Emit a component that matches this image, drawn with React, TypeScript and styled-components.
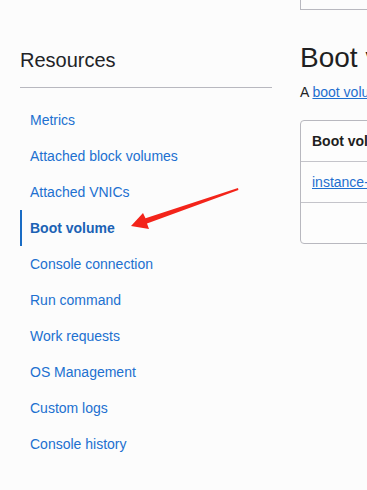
import React from 'react';
import styled, { createGlobalStyle } from 'styled-components';

const GlobalStyle = createGlobalStyle`
  html, body {
    margin: 0;
    padding: 0;
    background: #fcfcfc;
    font-family: "Liberation Sans", Arial, sans-serif;
    overflow: hidden;
  }
`;

const Shell = styled.div`
  position: relative;
  width: 367px;
  height: 490px;
  overflow: hidden;
`;

const Page = styled.div`
  display: flex;
  align-items: flex-start;
  gap: 28px;
  padding-left: 20px;
`;

const Sidebar = styled.aside`
  width: 252px;
  flex-shrink: 0;
  padding-top: 48px;
`;

const SideTitle = styled.h2`
  margin: 0;
  font-size: 20px;
  line-height: 24px;
  font-weight: 400;
  color: #222326;
  padding-bottom: 15px;
  border-bottom: 1px solid #b8b8bf;
`;

const NavList = styled.ul`
  list-style: none;
  margin: 14px 0 0;
  padding: 0;
`;

const NavItem = styled.li<{ $active?: boolean }>`
  height: 36px;
  display: flex;
  align-items: center;
  padding-left: 8px;
  border-left: 2px solid ${({ $active }) => ($active ? '#1a6cc4' : 'transparent')};
  font-size: 14px;
  font-weight: ${({ $active }) => ($active ? 700 : 400)};
  color: ${({ $active }) => ($active ? '#1b62b5' : '#2170d0')};
  white-space: nowrap;
`;

const Main = styled.main`
  width: 600px;
  flex-shrink: 0;
`;

const TopPanel = styled.div`
  height: 9px;
  border: 1px solid #b8b8bf;
  border-top: none;
`;

const Heading = styled.h1`
  margin: 32px 0 0;
  font-size: 28px;
  line-height: 32px;
  font-weight: 400;
  color: #1f1f22;
`;

const Intro = styled.p`
  margin: 8px 0 0;
  font-size: 14px;
  line-height: 20px;
  color: #222326;
  white-space: nowrap;
`;

const Link = styled.a`
  color: #1f6fcf;
  text-decoration: underline;
`;

const Table = styled.div`
  margin-top: 18px;
  border: 1px solid #b8b8bf;
  border-radius: 4px;
  background: #fdfdfd;
`;

const Row = styled.div<{ $header?: boolean }>`
  height: 40px;
  display: flex;
  align-items: center;
  padding-left: 11px;
  font-size: 14px;
  font-weight: ${({ $header }) => ($header ? 700 : 400)};
  color: #1e1e21;
  border-top: 1px solid #c4c4ca;

  &:first-child {
    border-top: none;
  }
`;

const Arrow = styled.svg`
  position: absolute;
  left: 0;
  top: 0;
  pointer-events: none;
`;

const items = [
  'Metrics',
  'Attached block volumes',
  'Attached VNICs',
  'Boot volume',
  'Console connection',
  'Run command',
  'Work requests',
  'OS Management',
  'Custom logs',
  'Console history',
];

const App: React.FC = () => {
  return (
    <Shell>
      <GlobalStyle />
      <Page>
        <Sidebar>
          <SideTitle>Resources</SideTitle>
          <NavList>
            {items.map((label) => (
              <NavItem key={label} $active={label === 'Boot volume'}>
                {label}
              </NavItem>
            ))}
          </NavList>
        </Sidebar>
        <Main>
          <TopPanel />
          <Heading>Boot volume</Heading>
          <Intro>
            A <Link>boot volume</Link> is a detachable block storage device that contains the image.
          </Intro>
          <Table>
            <Row $header>Boot volume</Row>
            <Row>
              <Link>instance-20240101-boot-volume</Link>
            </Row>
            <Row />
          </Table>
        </Main>
      </Page>
      <Arrow width="367" height="490" viewBox="0 0 367 490">
        <polygon
          points="238,188 145.5,218.3 143,213 131,226 149,229 147,223.6 238.4,190"
          fill="#f3241a"
        />
      </Arrow>
    </Shell>
  );
};

export default App;
